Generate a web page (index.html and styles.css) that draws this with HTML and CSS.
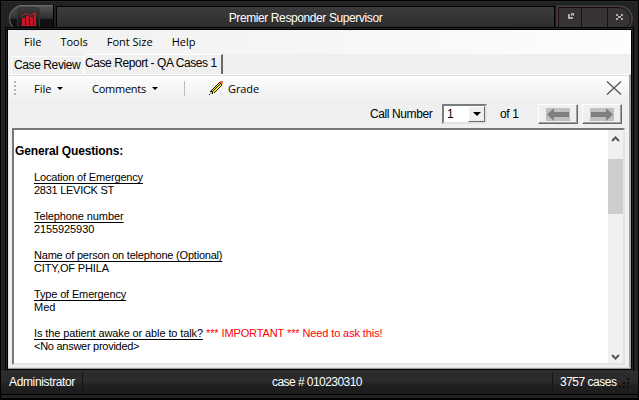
FILE: index.html
```
<!DOCTYPE html>
<html lang="en">
<head>
<meta charset="utf-8">
<title>Premier Responder Supervisor</title>
<link rel="stylesheet" href="styles.css">
</head>
<body>
<div class="window">
  <header class="titlebar">
    <svg class="app" width="48" height="26" viewBox="0 0 48 26">
      <defs>
        <linearGradient id="cap" x1="0" y1="0" x2="0" y2="1"><stop offset="0" stop-color="#555656"/><stop offset=".5" stop-color="#303030"/><stop offset=".55" stop-color="#121212"/><stop offset="1" stop-color="#0b0b0b"/></linearGradient>
        <linearGradient id="tile" x1="0" y1="0" x2="0" y2="1"><stop offset="0" stop-color="#3d3d3d"/><stop offset="1" stop-color="#0c0c0c"/></linearGradient>
      </defs>
      <path d="M47.500 .5H14A13 13 0 0 0 14 26H47.500Z" fill="url(#cap)" stroke="#686a6a"/>
      <path d="M47.500 0V26" stroke="#000"/>
      <rect x="11.500" y="2.500" width="22" height="22" rx="3" fill="url(#tile)" stroke="#353535"/>
      <path d="M16 13h3v7h-3zM20 11h3v9h-3zM24 12h3v8h-3zM28 8h2v12h-2z" fill="#c4182a"/>
      <path d="M15 11.500L20 8.500L24 10.500L29 7.500M15 20.500H30" stroke="#c4182a" fill="none"/>
    </svg>
    <h1 class="title">Premier Responder Supervisor</h1>
    <svg class="controls" width="78" height="26" viewBox="0 0 78 26">
      <path d="M1.500 1.500H64A12 12 0 0 1 64 25.500H1.500Z" fill="#373233" stroke="#3e4244" stroke-width="2"/>
      <path d="M2.500 2.500H63A11.500 11.500 0 0 1 63 25.500H2.500ZM25.500 2V26M51.500 2V26" fill="none" stroke="#210b0b"/>
      <path d="M12 9h2v3h3v2h-5zM15 8h3v3h-1v-1h-1v1h-1zM60 9h2v2h-2zM65 9h2v2h-2zM62 11h3v2h-3zM60 13h2v2h-2zM65 13h2v2h-2z" fill="#a8adb7"/>
    </svg>
  </header>
  <main class="client">
    <nav class="menu"><span>File</span><span>Tools</span><span>Font Size</span><span>Help</span></nav>
    <div class="tabs"><span class="tab">Case Review</span><span class="tab tab-on">Case Report - QA Cases 1</span></div>
    <section class="panel">
      <div class="toolbar">
        <i class="grip"></i>
        <span class="tool tool-file">File<i class="caret"></i></span>
        <span class="tool tool-comments">Comments<i class="caret"></i></span>
        <i class="divider"></i>
        <svg class="pencil" width="16" height="16" viewBox="0 0 16 16" shape-rendering="crispEdges">
          <path d="M1 15L3 10L11 2L14 5L6 13Z" fill="#111"/>
          <path d="M3 11L11 3L13 5L5 13Z" fill="#f4ea1b"/>
          <path d="M4 12L12 4" stroke="#222"/>
          <path d="M12 1h2l1 1v2h-2l-1-1z" fill="#e8754d"/>
          <path d="M2 12h2v2H2z" fill="#bbb"/>
        </svg>
        <span class="tool tool-grade">Grade</span>
        <svg class="close" width="16" height="16" viewBox="0 0 16 16"><path d="M1 1.500L15 14.500M15 1.500L1 14.500" stroke="#555" stroke-width="1.300"/></svg>
      </div>
      <div class="callbar">
        <span class="call-label">Call Number</span>
        <span class="select"><span class="value">1</span><span class="drop"><i class="caret"></i></span></span>
        <span class="total">of 1</span>
        <span class="step"><svg width="24" height="13" viewBox="0 0 24 13"><path d="M0 0h24v13H0z" fill="#c0c0c0"/><path d="M1 6.500L8 0V4H23V9H8V13Z" fill="#808080"/></svg></span>
        <span class="step"><svg width="24" height="13" viewBox="0 0 24 13"><path d="M0 0h24v13H0z" fill="#c0c0c0"/><path d="M23 6.500L16 0V4H1V9H16V13Z" fill="#808080"/></svg></span>
      </div>
      <div class="report">
        <article class="text">
          <h2 class="heading">General Questions:</h2>
          <dl class="answers">
            <dt class="q-location">Location of Emergency</dt><dd class="a-location">2831 LEVICK ST</dd>
            <dt class="q-phone">Telephone number</dt><dd class="a-phone">2155925930</dd>
            <dt class="q-name">Name of person on telephone (Optional)</dt><dd class="a-name">CITY,OF PHILA</dd>
            <dt class="q-type">Type of Emergency</dt><dd>Med</dd>
            <dt class="q-awake">Is the patient awake or able to talk?<span class="alert">*** IMPORTANT *** Need to ask this!</span></dt><dd class="a-none">&lt;No answer provided&gt;</dd>
          </dl>
        </article>
        <div class="scroll">
          <svg width="15" height="16" viewBox="0 0 15 16"><path d="M4 11L7.500 7.500L11 11" fill="none" stroke="#555" stroke-width="2"/></svg>
          <i class="thumb"></i>
          <svg class="down" width="15" height="16" viewBox="0 0 15 16"><path d="M4 8L7.500 11.500L11 8" fill="none" stroke="#555" stroke-width="2"/></svg>
        </div>
      </div>
    </section>
  </main>
  <footer class="status">
    <span class="user">Administrator</span>
    <span class="case">case # 010230310</span>
    <span class="count">3757 cases</span>
    <svg class="resize" width="13" height="12" viewBox="0 0 13 12"><path d="M8 1h2v2H8zM4 5h2v2H4zM8 5h2v2H8zM0 9h2v2H0zM4 9h2v2H4zM8 9h2v2H8z" fill="#0c0c0c"/></svg>
  </footer>
</div>
</body>
</html>
```
FILE: styles.css
```
* { box-sizing: border-box; }
body { margin: 0; background: #000; font: 12px "Liberation Sans", sans-serif; color: #000; overflow: hidden; }
h1, h2, dl, dd { margin: 0; font: inherit; }
i { display: block; flex: none; }
svg { display: block; flex: none; }
.window { width: 639px; height: 400px; display: flex; flex-direction: column; border: 1px solid #000; border-bottom-width: 2px; background: #222; }

.titlebar { height: 29px; flex: none; display: flex; padding: 3px 4px 0 5px; border-top: 1px solid #2b2b2b; }
.title { flex: 1; margin: 1px 1px 0 2px; height: 26px; border: 1px solid #000; border-bottom: 0; background: linear-gradient(#3c3c3c, #292929); color: #fff; text-align: center; line-height: 23px; letter-spacing: -.4px; }

.client { height: 339px; flex: none; margin: 0 7px; display: flex; flex-direction: column; background: #efefef; box-shadow: 0 0 0 1px #000, 0 0 0 2px #262626, 0 0 0 3px #000; border-bottom: 1px solid #9b9b9b; }
.menu { height: 24px; flex: none; display: flex; gap: 19px; padding-left: 16px; background: linear-gradient(90deg, #f0f0f0, #fdfdfd); font: 11px/24px "Open Sans", sans-serif; }
.tabs { height: 20px; flex: none; display: flex; align-items: flex-end; padding-left: 3px; }
.tab { width: 73px; height: 18px; padding-left: 2px; border: 1px solid #fff; border-bottom: 0; line-height: 16px; letter-spacing: -.4px; white-space: nowrap; }
.tab-on { width: 139px; height: 20px; padding-left: 0; border-right: 2px solid #696969; letter-spacing: -.43px; line-height: 17px; }
.panel { flex: 1; min-height: 0; display: flex; flex-direction: column; border: 1px solid #e0e0e0; border-top-color: #fff; border-right: 2px solid #a0a0a0; }
.toolbar { height: 26px; flex: none; display: flex; align-items: center; background: linear-gradient(#fdfdfd, #efefef); border-top: 1px solid #e0e0e0; padding: 0 7px 1px 5px; font: 11px "Open Sans", sans-serif; }
.grip { width: 2px; height: 14px; background: repeating-linear-gradient(#b5b5b5 0 2px, transparent 2px 4px); }
.tool { display: flex; align-items: center; }
.tool-file { margin-left: 18px; width: 58px; }
.tool-comments { width: 92px; letter-spacing: -.25px; }
.tool-grade { margin-left: 4px; letter-spacing: -.1px; }
.caret { width: 0; height: 0; margin-left: 6px; border: 3px solid transparent; border-top-color: #000; border-bottom: 0; }
.divider { width: 1px; height: 15px; background: #bdbdbd; margin-right: 23px; }
.close { margin-left: auto; }
.callbar { height: 27px; flex: none; display: flex; align-items: center; padding: 0 0 1px 361px; }
.call-label { width: 72px; letter-spacing: -.4px; }
.select { width: 45px; height: 20px; display: flex; background: #fff; border: 2px solid; border-color: #7c7c7c #e3e3e3 #e3e3e3 #7c7c7c; }
.value { flex: 1; padding-left: 3px; line-height: 17px; }
.drop { width: 17px; height: 16px; display: flex; align-items: center; background: #efefef; border: 1px solid; border-color: #fff #696969 #696969 #fff; }
.drop .caret { margin-left: 4px; border-width: 4px 4px 0; }
.total { width: 38px; margin-left: 13px; letter-spacing: -.4px; }
.step { width: 40px; height: 20px; display: flex; align-items: center; justify-content: center; border: 1px solid; border-color: #fff #696969 #696969 #fff; box-shadow: inset -1px -1px #a0a0a0; margin-right: 4px; }
.report { flex: 1; min-height: 0; display: flex; margin: 0 4px 2px 3px; border: 2px solid; border-color: #777 #e3e3e3 #e3e3e3 #777; background: #fff; }
.text { flex: 1; padding: 15px 0 0 1px; font: 11px/13px "Liberation Sans", sans-serif; white-space: nowrap; }
.heading { font-size: 12px; font-weight: bold; line-height: 13px; letter-spacing: -.15px; }
.answers { padding: 13px 0 0 19px; }
.answers dt { text-decoration: underline; text-underline-offset: 2px; text-decoration-skip-ink: none; }
.answers dd { margin-bottom: 13px; }
.q-location { letter-spacing: -.17px; }
.q-phone { letter-spacing: -.1px; }
.q-name { letter-spacing: -.21px; }
.q-type { letter-spacing: -.15px; }
.q-awake { letter-spacing: -.11px; }
.a-location, .a-none { letter-spacing: -.27px; }
.a-phone { letter-spacing: -.1px; }
.a-name { letter-spacing: -.15px; }
.alert { display: inline-block; margin-left: 3px; color: #f00; }
.scroll { width: 15px; display: flex; flex-direction: column; background: #f0f0f0; }
.thumb { height: 55px; margin-top: 13px; background: #cdcdcd; }
.down { margin-top: auto; }

.status { height: 24px; flex: none; position: relative; margin-top: 2px; display: flex; align-items: center; background: linear-gradient(#2b2b2b 0 45%, #202020 60%, #1c1c1c); border-top: 1px solid #333; border-bottom: 1px solid #000; color: #fff; }
.status span { height: 100%; line-height: 21px; }
.user { width: 82px; padding-left: 8px; letter-spacing: -.36px; border-right: 1px solid #151515; }
.case { width: 470px; padding-left: 189px; letter-spacing: -.55px; border-right: 1px solid #151515; }
.count { width: 66px; padding-left: 7px; letter-spacing: -.5px; }
```
